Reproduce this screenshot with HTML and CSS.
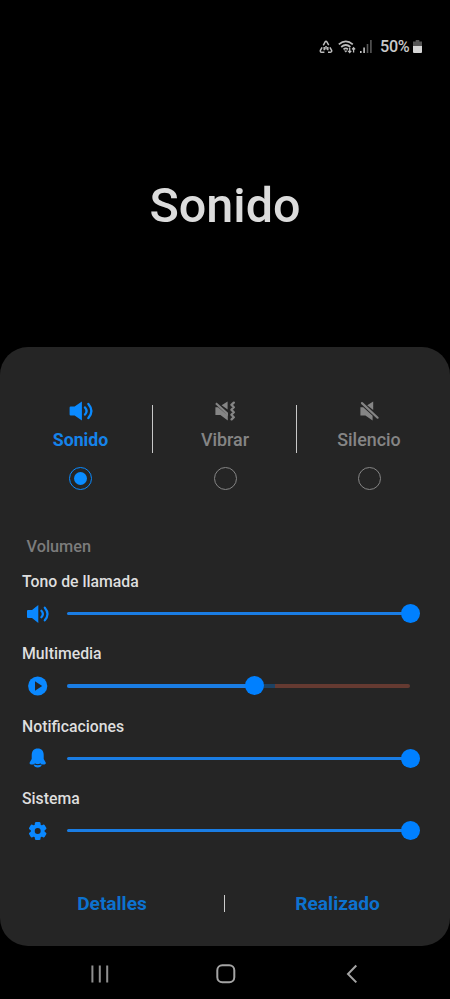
FILE: index.html
```
<!DOCTYPE html>
<html lang="es">
<head>
<meta charset="utf-8">
<title>Sonido</title>
<link rel="stylesheet" href="styles.css">
</head>
<body>
<header class="status">
  <svg class="recycle" width="14" height="14" viewBox="0 0 14 14" fill="none" stroke="#bdbdbd" stroke-width="1.5"><path d="M4.3 5.4 6.1 2Q7 .7 7.9 2L9.7 5.2M10.9 7.3l1.7 3q.5 1.7-1.2 1.9H9M5.4 12.2H2.5q-1.6-.2-1.1-1.9L3.1 7.3M5.2 7v3.2M7 6v3.4M8.8 7v3.2"/></svg>
  <svg class="wifi" width="18" height="14" viewBox="0 0 18 14" fill="none" stroke="#bdbdbd"><path stroke-width="1.7" d="M.8 4.4Q7.8-1.8 14.8 4.4M3.2 7Q7.8 3 12.4 7M5.5 9.4Q7.8 7.5 10 9.4"/><path fill="#bdbdbd" stroke="none" d="m7.8 12.6-1.9-2.2h3.8z"/><path stroke-width="1.3" d="M11.7 7.7v4.8m-1.6-1.6 1.6 1.6 1.6-1.6M15.6 12.6V7.8m-1.5 1.6 1.5-1.6 1.5 1.6"/></svg>
  <svg class="signal" width="12" height="13" viewBox="0 0 12 13"><path fill="#c4c4c4" d="M0 11h1.6v2H0zM3.3 7.6h1.6V13H3.3z"/><path fill="#585858" d="M6.7 4h1.6v9H6.7zM10.1 0h1.6v13h-1.6z"/></svg>
  <span class="percent">50%</span>
  <svg class="battery" width="9" height="13" viewBox="0 0 9 13"><path fill="#555" d="M2.7 0h3.6v1.4H9V7H0V1.4h2.7z"/><path fill="#d5d5d5" d="M0 6h9v6q0 1-1 1H1q-1 0-1-1z"/></svg>
</header>
<h1>Sonido</h1>
<main class="panel">
  <section class="modes">
    <div class="mode active">
      <svg width="24" height="20" viewBox="0 0 24 20"><path fill="currentColor" d="M.6 6.6q0-1 1-1H5.6L12.9.4V19.6L5.6 14.4h-4q-1 0-1-1z"/><path fill="none" stroke="currentColor" stroke-width="2.3" stroke-linecap="round" d="M16 6.4q3.2 3.6 0 7.2M19.4 2.9q6 7.1 0 14.2"/></svg>
      <span class="name">Sonido</span><span class="radio"></span>
    </div>
    <div class="mode">
      <svg width="24" height="20" viewBox="0 0 24 20"><path fill="currentColor" d="M2.4 6.2H5L14.8 14.4v5L7.4 14H2.4zM8.6 4.2 14.6.6V8.6zM2.2 3 3.6 1.6 15 11.8v3z"/><path fill="none" stroke="currentColor" stroke-width="2.3" stroke-linecap="round" stroke-linejoin="round" d="m20.8 1.6-2.4 2.2 2.4 2.5-2.4 2.5 2.4 2.5-2.4 2.5 2.4 2.4-2.2 2.2"/></svg>
      <span class="name">Vibrar</span><span class="radio"></span>
    </div>
    <div class="mode">
      <svg width="24" height="20" viewBox="0 0 24 20"><path fill="currentColor" d="M3.4 6.3H6.2L15.6 14.8V19.6L8.4 14.4H3.4zM10.2 4.2 16.2.5V8.9z"/><path stroke="currentColor" stroke-width="2.2" stroke-linecap="round" d="M5 2.1 20.6 16.7"/></svg>
      <span class="name">Silencio</span><span class="radio"></span>
    </div>
  </section>
  <h2>Volumen</h2>
  <section class="levels">
    <div class="level">
      <label>Tono de llamada</label>
      <div class="control"><svg width="24" height="20" viewBox="0 0 24 20"><path fill="currentColor" d="M1 6.9q0-1 1-1H6L12.3 1V19L6 14.1H2q-1 0-1-1z"/><path fill="none" stroke="currentColor" stroke-width="2.2" stroke-linecap="round" d="M15.4 6.7q3 3.3 0 6.6M18.8 3.7q5.4 6.3 0 12.6"/></svg><div class="track"><i class="fill"></i><b class="thumb"></b></div></div>
    </div>
    <div class="level">
      <label>Multimedia</label>
      <div class="control"><svg width="24" height="20" viewBox="0 0 24 20"><circle cx="11.7" cy="10" r="9.6" fill="currentColor"/><path fill="#252525" d="m9 5.2 7.2 4.8L9 14.8z"/></svg><div class="track media"><i class="fill"></i><b class="thumb"></b></div></div>
    </div>
    <div class="level">
      <label>Notificaciones</label>
      <div class="control"><svg width="24" height="20" viewBox="0 0 24 20"><path fill="currentColor" d="M11.7.6C7.7.6 5.7 3.3 5.7 7.2V11L3.8 14.3Q3 16.4 5 16.4H18.4q2 0 1.2-2.1L17.7 11V7.2C17.7 3.3 15.7.6 11.7.6zM7.2 16H16.2Q15 19.5 11.7 19.5T7.2 16z"/><path fill="none" stroke="#252525" stroke-width="1.1" d="M8.6 15.8q3.1 2 6.2 0"/></svg><div class="track"><i class="fill"></i><b class="thumb"></b></div></div>
    </div>
    <div class="level">
      <label>Sistema</label>
      <div class="control"><svg width="24" height="20" viewBox="0 0 24 20"><g fill="currentColor"><circle cx="11.7" cy="10" r="7"/><rect x="8.9" y="1" width="5.6" height="18" rx="1.3"/><rect x="8.9" y="1" width="5.6" height="18" rx="1.3" transform="rotate(60 11.7 10)"/><rect x="8.9" y="1" width="5.6" height="18" rx="1.3" transform="rotate(120 11.7 10)"/></g><circle cx="11.7" cy="10" r="3" fill="#252525"/></svg><div class="track"><i class="fill"></i><b class="thumb"></b></div></div>
    </div>
  </section>
  <footer class="actions"><span>Detalles</span><i class="divider"></i><span>Realizado</span></footer>
</main>
<nav>
  <svg width="18" height="20" viewBox="0 0 18 20" stroke="#8f8f8f" stroke-width="2"><path d="M1.4 1.5v17M8.8 1.5v17M16.2 1.5v17"/></svg>
  <svg class="home" width="20" height="20" viewBox="0 0 20 20" fill="none" stroke="#a4a4a4" stroke-width="2"><rect x="1.3" y="1.3" width="17" height="17" rx="5"/></svg>
  <svg width="12" height="20" viewBox="0 0 12 20" fill="none" stroke="#a4a4a4" stroke-width="2"><path d="M10.3 1.5 2 10l8.3 8.4"/></svg>
</nav>
</body>
</html>
```

FILE: styles.css
```
* { box-sizing: border-box; }
body {
  margin: 0;
  width: 450px;
  height: 999px;
  background: #000;
  font-family: Roboto, sans-serif;
  display: flex;
  flex-direction: column;
  overflow: hidden;
}
svg { display: block; flex: none; }
.status {
  height: 93px;
  flex: none;
  display: flex;
  align-items: center;
  padding-left: 319px;
}
.wifi { margin-left: 5px; }
.signal { margin-left: 4px; }
.percent {
  margin-left: 8px;
  width: 32px;
  font-size: 16.2px;
  font-weight: 500;
  letter-spacing: -.3px;
  color: #c9c9c9;
}
.battery { margin-left: 1px; }
h1 {
  margin: 83px 0 0;
  height: 171px;
  line-height: 60px;
  font-size: 48.5px;
  font-weight: 500;
  text-align: center;
  color: #dcdcdc;
}
.panel {
  height: 599px;
  flex: none;
  border-radius: 28px;
  background: #252525;
  padding-top: 54px;
}
.modes {
  display: grid;
  grid-template-columns: 145px 144px 144px;
  padding-left: 8px;
}
.mode {
  height: 90px;
  display: flex;
  flex-direction: column;
  align-items: center;
  color: #858585;
  background: linear-gradient(#c8c8c8, #c8c8c8) right 4px / 1px 48px no-repeat;
}
.mode:last-child { background: none; }
.mode.active { color: #0a8aff; }
.name {
  margin-top: 7px;
  line-height: 24px;
  font-size: 17.9px;
  font-weight: 500;
}
.active .name { font-weight: 700; font-size: 17.7px; color: #1583ea; }
.radio {
  margin-top: 15px;
  width: 23px;
  height: 23px;
  border: 1px solid;
  border-radius: 50%;
  display: grid;
  place-items: center;
}
.active .radio::after {
  content: "";
  width: 13px;
  height: 13px;
  border-radius: 50%;
  background: #0a8cff;
}
h2 {
  margin: 46px 0 0 26.5px;
  line-height: 20px;
  font-size: 16.3px;
  font-weight: 500;
  color: #7c7c7c;
}
.levels {
  margin: 15px 40px 0 22px;
  display: grid;
  gap: 20.4px;
}
.level { height: 52px; }
.level label {
  display: block;
  line-height: 20px;
  font-size: 15.8px;
  font-weight: 500;
  color: #dedede;
}
.control {
  margin-top: 11.5px;
  height: 20px;
  margin-left: 3.5px;
  display: flex;
  align-items: center;
  gap: 17px;
  color: #0a88ff;
}
.track {
  flex: 1;
  height: 3.5px;
  border-radius: 2px;
  display: flex;
  align-items: center;
}
.fill {
  flex: 1;
  height: 3.5px;
  border-radius: 2px 0 0 2px;
  background: #1a7de4;
}
.thumb {
  width: 19px;
  height: 19px;
  margin: 0 -9.5px;
  border-radius: 50%;
  background: #0080ff;
}
.media { background: linear-gradient(90deg, #1d4263 60.5%, #653a31 60.5%); }
.media .fill { flex: none; width: 188px; }
.actions {
  margin-top: 50px;
  height: 24px;
  display: grid;
  grid-template-columns: 224px 1px 225px;
  align-items: center;
  text-align: center;
  font-size: 19.1px;
  font-weight: 700;
  color: #0d72cf;
}
.divider { height: 17px; background: #ccc; }
nav {
  flex: 1;
  display: flex;
  justify-content: space-between;
  align-items: center;
  padding: 2px 92px 0 91px;
}
.home { margin-right: 3px; }
```
